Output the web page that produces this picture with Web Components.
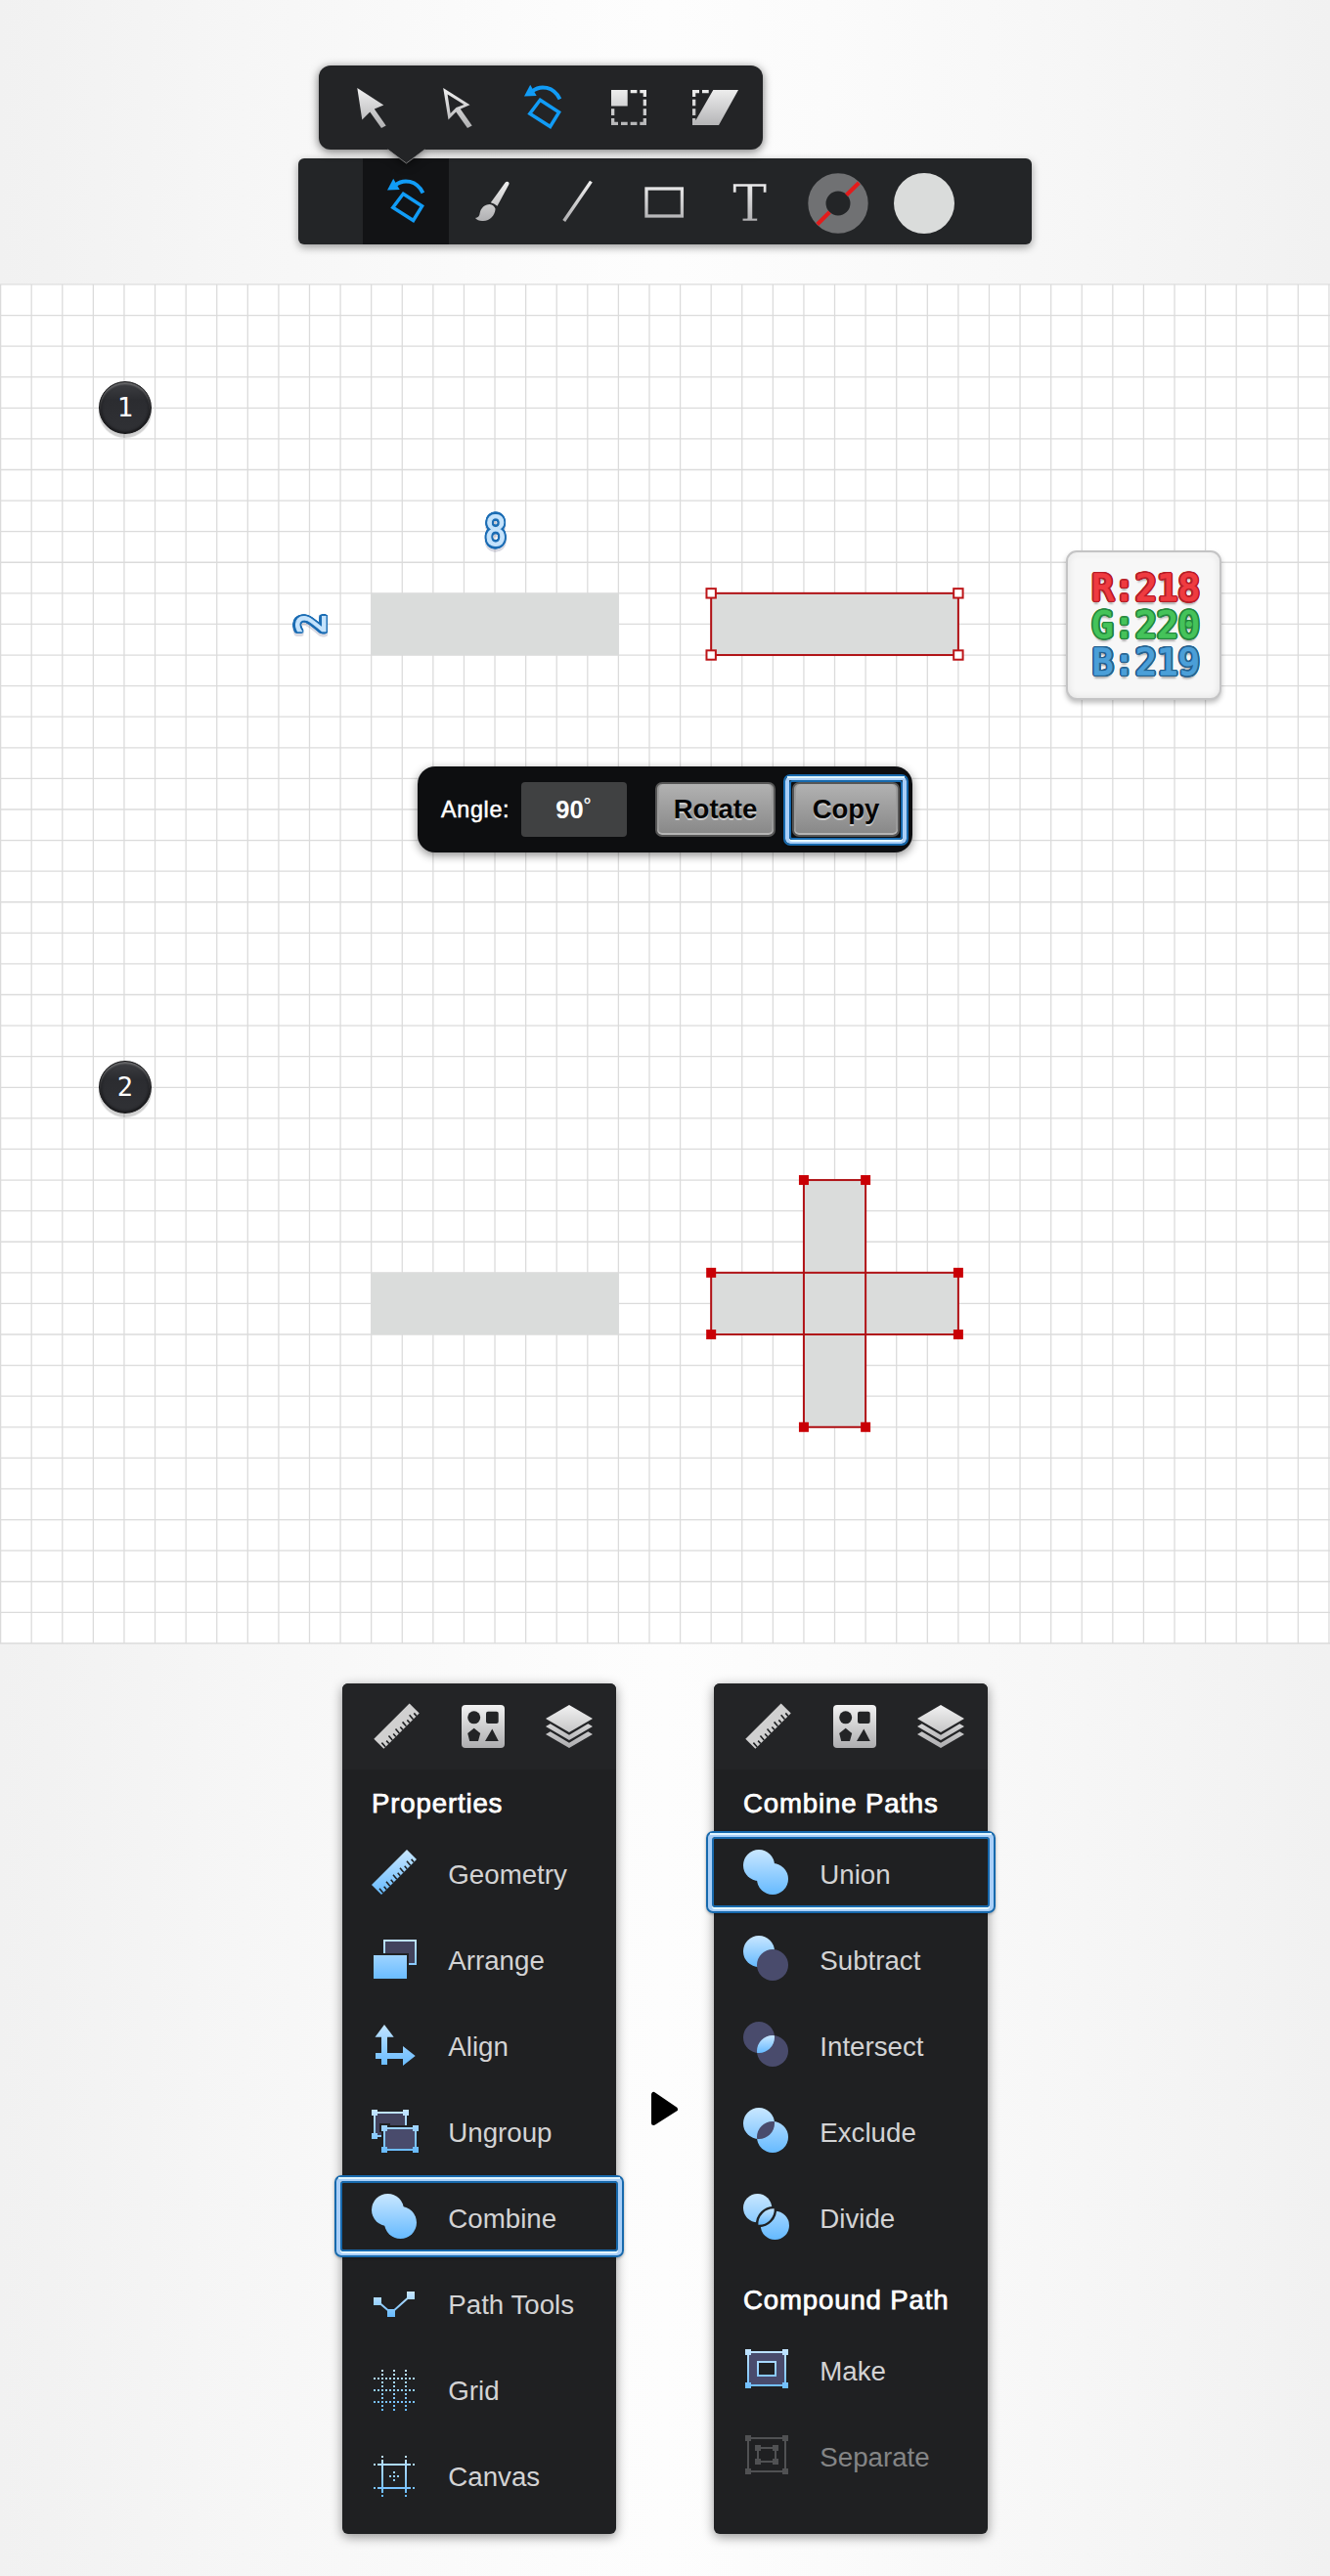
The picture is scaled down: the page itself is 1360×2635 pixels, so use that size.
<!DOCTYPE html>
<html lang="en"><head><meta charset="utf-8"><title>Vector tutorial</title>
<style>
html,body{margin:0}
body{width:1360px;height:2635px;overflow:hidden;font-family:"Liberation Sans",Arial,sans-serif;background:linear-gradient(90deg,#f1f1f1 0,#f7f7f7 22%,#fcfcfc 42%,#fdfdfd 50%,#fbfbfb 62%,#f7f7f7 78%,#f1f1f1 100%)}
</style></head><body>
<tutorial-page></tutorial-page>
<script>
const define=(name,html,setup)=>customElements.define(name,class extends HTMLElement{
  constructor(){super();this.attachShadow({mode:'open'});}
  connectedCallback(){this.shadowRoot.innerHTML=typeof html==='function'?html(this):html;if(setup)setup(this);}
});
const grads=`<defs>
<linearGradient id="g" gradientUnits="userSpaceOnUse" x1="0" y1="22" x2="0" y2="66"><stop offset="0" stop-color="#f2f2f2"/><stop offset="1" stop-color="#adadaf"/></linearGradient>
<linearGradient id="b" gradientUnits="userSpaceOnUse" x1="0" y1="1" x2="0" y2="47"><stop offset="0" stop-color="#c9e7ff"/><stop offset="1" stop-color="#66baff"/></linearGradient>
<clipPath id="lens"><circle cx="30" cy="31" r="16"/></clipPath></defs>`;

/* Ring of shadows that outlines a glyph at the given radius */
const outline=(r,c)=>Array.from({length:20},(_,i)=>`${(r*Math.cos(i*Math.PI/10)).toFixed(2)}px ${(r*Math.sin(i*Math.PI/10)).toFixed(2)}px 0 ${c}`).join(',');

const ruler=`<path d="M36 1 46 11 10 47 0 37Z"/><path stroke="#1f2123" stroke-width="1.6" fill="none" d="M11.8 45.2 8 40.8M15.3 41.7l-2.6-2.9M18.8 38.2 15 33.8M22.3 34.7l-2.6-2.9M25.8 31.2 22 26.8M29.3 27.7l-2.6-2.9M32.8 24.2 29 19.8M36.3 20.7l-2.6-2.9M39.8 17.2 36 12.8M43.2 13.8l-2.6-2.9"/>`;
const rotate=`<path fill="#119cf6" d="M27 31.5 33.2 19.7 39.7 31Z"/><path fill="none" stroke="#119cf6" stroke-width="3.9" d="M35 26.5C44 19.5 57 21.5 63.5 34.3"/><path fill="none" stroke="#119cf6" stroke-width="3.5" d="M43.3 35.3 62.6 47.8 53.6 62.5 32.8 49.2Z"/>`;

/* Tool glyphs, on an 88-unit cell */
const tools={
 select:`<path fill="url(#g)" d="M32.3 23 59.3 40.5 49.8 44.5 61.7 61.5 57 64 45.3 47.5 37.3 55.5Z"/>`,
 direct:`<path fill="url(#g)" fill-rule="evenodd" d="M32.2 23 59.5 40.3 49.8 44.5 61.7 61.5 57 64 45.3 47.5 37.5 55.5ZM36.6 29.6 39.6 49 45.5 43 53.5 39.9Z"/>`,
 rotate,
 rotateActive:`<g transform="translate(-2 1)">${rotate}</g>`,
 scale:`<path fill="url(#g)" d="M28 25h16.7v16.5H28ZM47.7 25h6.7v3.3h-6.7ZM57.3 25H64v7h-3.3v-3.7h-3.4ZM60.7 34.7H64v6.6h-3.3ZM60.7 44.3H64V51h-3.3ZM60.7 54H64v7h-6.7v-3.3h3.4ZM47.7 57.7h6.7V61h-6.7ZM38 57.7h6.7V61H38ZM28 54h3.3v3.7H35V61h-7ZM28 44.3h3.3V51H28Z"/>`,
 skew:`<path fill="url(#g)" d="M44.3 25H70L50 61H23V54h3.3v2.3ZM23 25h7v3.3h-3.7V32H23ZM33 25h6.7v3.3H33ZM23 34.7h3.3v6.6H23ZM23 44.3h3.3V51H23Z"/>`,
 brush:`<path fill="url(#g)" d="M57.6 24.8Q59 23 60.6 24T61.2 27L49.5 48.7Q46.2 46 42.8 45.2ZM41.8 47Q46.3 47.6 47.6 51.8C46.8 58.5 42.5 64 35 64Q29.5 64.3 27 61Q31.3 60.5 31.7 55.7C32.7 51 36.5 47 41.8 47Z"/>`,
 line:`<path stroke="url(#g)" stroke-width="3.4" d="M57.4 23.6 29.7 64"/>`,
 rect:`<rect x="26" y="31" width="36.4" height="28" fill="none" stroke="url(#g)" stroke-width="3.3"/>`,
 text:`<text x="43.8" y="64" text-anchor="middle" font-family="DejaVu Serif,serif" font-size="52.5" fill="url(#g)" stroke="#232527" stroke-width=".4">T</text>`,
 none:`<circle cx="46" cy="46" r="21.6" fill="none" stroke="#707173" stroke-width="18.2"/><path stroke="#e31b1b" stroke-width="4.2" d="M24.7 67.4 37.3 55M54.5 37.5 67.3 24.9"/>`,
 fill:`<circle cx="46" cy="46" r="31" fill="#dadcdb"/>`
};
define('tool-cell',el=>`<style>:host{display:block;width:88px;height:var(--cell-h,88px)}:host([active]){background:#121315}svg{display:block;overflow:visible}</style>
<svg width="88" height="86" viewBox="0 0 88 86">${grads}${tools[el.getAttribute('icon')]}</svg>`);

define('tool-popup',`<style>:host{display:flex;box-sizing:border-box;width:454px;height:86px;padding:0 7px;position:relative;z-index:2;filter:drop-shadow(0 2px 5px rgba(0,0,0,.55));--cell-h:86px;background:#232426;border-radius:12px}
.tip{position:absolute;left:70px;top:85px}</style>
<slot></slot><svg class="tip" width="40" height="16"><path fill="#232426" d="M0 0h39L19.5 15Z"/><path d="M0 .8 19.5 15 39 .8" fill="none" stroke="#8f8f90" stroke-width=".8"/></svg>`);
define('tool-bar',`<style>:host{display:flex;box-sizing:border-box;width:750px;height:88px;padding-left:66px;background:#232527;border-radius:6px;box-shadow:0 3px 9px rgba(0,0,0,.38)}</style><slot></slot>`);

/* Highlight frame drawn over a button or menu row */
define('focus-ring',`<style>:host{display:block;box-sizing:border-box;border:2px solid #1769ad;border-radius:7px;padding:4px;background:none;box-shadow:inset 0 0 0 4px #a9cff8,0 1px 3px rgba(0,0,0,.3);position:relative;pointer-events:none}
div{box-sizing:border-box;height:100%;border:2px solid #1769ad;border-radius:3px;box-shadow:0 2px 0 #e6faff}
i{position:absolute;left:2px;right:2px;top:0;height:2px;background:#dff5ff}</style><div></div><i></i>`);

define('angle-button',`<style>:host{display:flex;box-sizing:border-box;height:56px;align-items:center;justify-content:center;background:linear-gradient(#b2b2b2,#878787);border:2px solid #565656;border-radius:7px;box-shadow:inset 0 -2px 0 #b5b5b5,inset 2px 0 0 #9b9b9b,inset -2px 0 0 #9b9b9b;color:#050505;font:bold 27.5px "Liberation Sans",sans-serif;text-shadow:0 1.5px 0 #ccc;position:relative}
::slotted(focus-ring){position:absolute!important;left:-11px;top:-10px;width:128px;height:73px}</style><slot></slot>`);
define('angle-panel',`<style>:host{display:flex;align-items:center;box-sizing:border-box;width:506px;height:88px;padding-left:24px;background:#0d0e10;border-radius:18px;box-shadow:0 3px 10px rgba(0,0,0,.45);color:#fff}
.l{width:82px;font-size:23.4px;letter-spacing:.65px;-webkit-text-stroke:.5px #fff;white-space:nowrap}
.v{width:108px;height:56px;background:#404142;border-radius:4px;display:flex;align-items:center;justify-content:center;font-weight:bold;font-size:25.5px;position:relative}
.v span{padding-right:9px}.v sup{position:absolute;left:63.5px;top:14px;font-size:20px;line-height:20px;font-weight:normal;-webkit-text-stroke:.3px #fff}
.r{width:123px;margin-left:29px}.c{width:110px;margin-left:17px}</style>
<span class="l">Angle:</span><div class="v"><span>90</span><sup>°</sup></div><angle-button class="r">Rotate</angle-button><angle-button class="c">Copy<focus-ring></focus-ring></angle-button>`);

define('step-badge',`<style>:host{display:flex;width:54px;height:54px;align-items:center;justify-content:center;border-radius:50%;box-sizing:border-box;border:1px solid #151517;background:linear-gradient(#3e3f43,#2b2c30 35%,#303135);box-shadow:inset 0 2px 2px rgba(255,255,255,.35),inset 0 0 3px 1px #101012,0 4px 1px rgba(0,0,0,.18);color:#fff;font:27px "DejaVu Sans Mono",monospace}
span{position:relative;top:-1px}</style><span><slot></slot></span>`);

define('color-card',`<style>:host{display:flex;flex-direction:column;box-sizing:border-box;width:159px;height:153px;padding:18px 0 0 24.6px;border:2px solid #c4c4c5;border-radius:11px;background:#f7f7f7;box-shadow:inset 0 0 7px #dedede,inset 0 3px 2px #fff,0 3px 5px rgba(0,0,0,.25);font:36.6px/38.1px "DejaVu Sans Mono",monospace}
span{height:38.1px}
.r{color:#ef3b40;-webkit-text-stroke:1.4px #ef3b40;text-shadow:${outline(2.3,'#b61e28')},0 4px 2px rgba(0,0,0,.3)}
.g{color:#45c35a;-webkit-text-stroke:1.4px #45c35a;text-shadow:${outline(2.3,'#24873e')},0 4px 2px rgba(0,0,0,.3)}
.b{color:#4b9fd8;-webkit-text-stroke:1.4px #4b9fd8;text-shadow:${outline(2.3,'#25618e')},0 4px 2px rgba(0,0,0,.3)}</style>
<span class="r">R:218</span><span class="g">G:220</span><span class="b">B:219</span>`);

/* Outlined measure number */
define('size-mark',`<style>:host{display:flex;width:40px;height:48px;align-items:center;justify-content:center;font:39px/48px "DejaVu Sans Mono",monospace;color:#c5e3fc;-webkit-text-stroke:1px #c5e3fc;text-shadow:${outline(2.5,'#1c6db4')};filter:drop-shadow(0 3px .6px rgba(70,70,110,.2))}
span{display:block;transform:scale(.94,1.08)}:host([turned]) span{transform:rotate(-90deg) scale(.9,1.06)}</style><span><slot></slot></span>`);

const P=31.59, OX=.6, OY=.95;
define('drawing-canvas',()=>{
 const X=k=>OX+P*k, Y=k=>OY+P*k, f=n=>n.toFixed(2); let d='';
 for(let i=0;i<=43;i++)d+=`M${f(X(i))} .4V${f(Y(44)+.6)}`;
 for(let j=0;j<=44;j++)d+=`M0 ${f(Y(j))}H1360`;
 const bar=(a,b,c,e,line)=>`<rect x="${X(a)}" y="${Y(b)}" width="${P*c}" height="${P*e}" ${line?'fill="none" stroke="#b01216" stroke-width="2"':'fill="#dadcdb"'}/>`;
 const hs=(a,b,c,e,open)=>[[a,b],[a+c,b],[a,b+e],[a+c,b+e]].map(([x,y])=>open?`<rect x="${X(x)-4.7}" y="${Y(y)-4.7}" width="9.4" height="9.4" fill="#fff" stroke="#bd1518" stroke-width="2"/>`:`<rect x="${X(x)-5}" y="${Y(y)-5}" width="10" height="10" fill="#c90005"/>`).join('');
 return `<style>:host{display:block;position:relative;height:1392px;background:linear-gradient(#fff,#fff) 0 0/100% 1391px no-repeat}svg.art{display:block}
 step-badge,color-card,angle-panel,size-mark{position:absolute}</style>
 <svg class="art" width="1360" height="1392">
 <path d="${d}" fill="none" stroke="#000" stroke-opacity=".14" stroke-width="1.3"/>
 ${bar(12,10,8,2)}${bar(23,10,8,2)}${bar(23,10,8,2,1)}${hs(23,10,8,2,1)}
 ${bar(12,32,8,2)}${bar(23,32,8,2)}${bar(26,29,2,8)}${bar(23,32,8,2,1)}${bar(26,29,2,8,1)}${hs(23,32,8,2)}${hs(26,29,2,8)}</svg>
 <size-mark style="left:487px;top:230px">8</size-mark><size-mark turned style="left:299px;top:324px">2</size-mark>
 <step-badge style="left:101px;top:100px">1</step-badge><step-badge style="left:101px;top:795px">2</step-badge>
 <color-card style="left:1090px;top:272.5px"></color-card>
 <angle-panel style="left:427px;top:494px"></angle-panel>`;
});

const two=`<circle cx="16" cy="17" r="16"/><circle cx="30" cy="31" r="16"/>`;
const sq=(s,pts)=>pts.map(([x,y])=>`<rect x="${x}" y="${y}" width="${s}" height="${s}" stroke="none"/>`).join('');
const B='fill="url(#b)"',D='#494b6c',N='#1f2123';
const lens=`<circle cx="16" cy="17" r="16" clip-path="url(#lens)"/>`;
const lensGrad=`<defs><linearGradient id="l" gradientUnits="userSpaceOnUse" x1="0" y1="15" x2="0" y2="33"><stop offset="0" stop-color="#c9e7ff"/><stop offset="1" stop-color="#66baff"/></linearGradient></defs>`;
const icons={
 geometry:`<g ${B}>${ruler}</g>`,
 arrange:`<rect x="13" y="6" width="32" height="24" fill="#42435d" stroke="url(#b)" stroke-width="2"/><path fill="${N}" d="M0 19h38v28H0Z"/><path ${B} d="M2 21h34v24H2Z"/>`,
 align:`<path ${B} d="M13 4 22.7 16.7H16V33H32V26L44.7 36 32 46V39H16V45H10V39H4V33H10V16.7H3.5Z"/>`,
 ungroup:`<g fill="url(#b)" stroke="url(#b)" stroke-width="2"><rect x="3" y="6" width="32" height="24" fill="#42435d"/>${sq(6,[[0,3],[32,3],[0,27]])}<path fill="${N}" stroke="none" d="M8 17h11v2h29v16H13v-2H10v-7H8Z"/><rect x="13" y="22" width="32" height="22" fill="${D}"/>${sq(6,[[10,19],[42,19],[10,41],[42,41]])}</g>`,
 combine:`<g ${B}><circle cx="16.5" cy="17.5" r="16.5"/><circle cx="29.5" cy="30.5" r="16.5"/></g>`,
 path:`<defs><linearGradient id="p" gradientUnits="userSpaceOnUse" x1="0" y1="13" x2="0" y2="39"><stop offset="0" stop-color="#c9e7ff"/><stop offset="1" stop-color="#66baff"/></linearGradient></defs><path d="M6 23 20 35 40 17" fill="none" stroke="url(#p)" stroke-width="2"/><g fill="url(#p)">${sq(8,[[2,19],[36,13],[16,31]])}</g>`,
 grid:`<path fill="none" stroke="url(#b)" stroke-width="2" stroke-dasharray="2 2" d="M2 14H44M2 26H44M2 38H44M11 5V47M23 5V47M35 5V47"/>`,
 canvas:`<path fill="none" stroke="url(#b)" stroke-width="2" d="M6 14H40M6 38H40M11 9V43M35 9V43M2 14h2M42 14h2M2 38h2M42 38h2M11 5v2M11 45v2M35 5v2M35 45v2M18 26h2M22 26h2M26 26h2M23 21v2M23 29v2"/>`,
 union:`<g ${B}>${two}</g>`,
 subtract:`<defs><linearGradient id="u" x1="0" y1="0" x2="0" y2="1"><stop offset="0" stop-color="#c9e7ff"/><stop offset="1" stop-color="#66baff"/></linearGradient></defs><circle cx="16" cy="17" r="16" fill="url(#u)"/><circle cx="30" cy="31" r="16" fill="${D}"/>`,
 intersect:`${lensGrad}<g fill="${D}">${two}</g><g fill="url(#l)">${lens}</g>`,
 exclude:`<g ${B}>${two}</g><g fill="${D}">${lens}</g>`,
 divide:`${lensGrad}<g ${B}><circle cx="14.6" cy="15.6" r="14.6"/><circle cx="32.4" cy="33.4" r="14.6"/></g><path fill="url(#l)" stroke="${N}" stroke-width="2.4" d="M32.8 15.2A16.8 16.8 0 0 1 14.2 33.8A17 17 0 0 1 32.8 15.2Z"/>`,
 make:`<g fill="url(#b)" stroke="url(#b)" stroke-width="2"><rect x="5" y="7" width="38" height="34" fill="${D}"/>${sq(6,[[2,4],[40,4],[2,38],[40,38]])}<rect x="15" y="17" width="18" height="14" fill="${N}"/></g>`,
 separate:`<g fill="#505153" stroke="#505153" stroke-width="2"><rect x="5" y="7" width="38" height="34" fill="none"/><rect x="15" y="17" width="18" height="14" fill="none"/>${sq(6,[[2,4],[40,4],[2,38],[40,38],[12,14],[30,14],[12,28],[30,28]])}</g>`
};
define('menu-item',el=>`<style>:host{display:flex;box-sizing:border-box;height:88px;padding-left:30px;align-items:center;position:relative;color:#d3d3d4;font-size:27.7px;white-space:nowrap}
:host([disabled]){color:#848586}svg{display:block;flex:none;width:48px;height:48px;overflow:visible}span{margin-left:30.3px;padding-top:5px}
focus-ring{position:absolute;left:-8px;top:2px;width:296px;height:84px}</style>
<svg viewBox="0 0 48 48">${grads}${icons[el.getAttribute('icon')]}</svg><span><slot></slot></span>${el.hasAttribute('selected')?'<focus-ring></focus-ring>':''}`);
define('menu-heading',`<style>:host{display:flex;box-sizing:border-box;height:var(--h,61px);align-items:flex-end;padding:0 0 10px 30px;color:#fff;font-size:27.6px;line-height:32px;letter-spacing:.85px;-webkit-text-stroke:.75px #fff;white-space:nowrap}</style><slot></slot>`);
define('menu-panel',`<style>:host{display:block;width:280px;height:870px;background:#1f2022;border-radius:6px;box-shadow:0 3px 12px rgba(0,0,0,.42)}
header{height:88px;background:#232426;border-radius:6px 6px 0 0}svg{display:block}</style>
<header><svg width="280" height="88">${grads}<g fill="url(#g)"><g fill="#d0d0d0" transform="translate(32.3 19.4) scale(1.01)">${ruler}</g>
<rect x="122" y="22" width="44" height="44" rx="4"/><path d="M232 22 256 36 232 50 208 36Z"/><path d="M208 44 212.7 41.3 232 52.7 251.3 41.3 256 44 232 58ZM208 52 212.7 49.3 232 60.7 251.3 49.3 256 52 232 66Z"/></g>
<g fill="#232426"><circle cx="134.7" cy="34.8" r="6.5"/><rect x="147" y="28.7" width="12.7" height="12.2" rx="2"/><path d="M134.7 45.8 141.2 51 139 59H130.2L128.2 51ZM153.3 46.5 159.8 59H146Z"/></g></svg></header><slot></slot>`);
define('play-arrow',`<style>:host{display:block;width:28px;height:38px}svg{display:block}</style><svg width="28" height="38"><path d="M2.5 3.5V32.5L24.5 18.5Z" stroke="#000" stroke-width="5" stroke-linejoin="round"/></svg>`);

define('tutorial-page',`<style>:host{display:flex;flex-direction:column}
header{height:290px;box-sizing:border-box;padding:67px 0 0 305px;display:flex;flex-direction:column;gap:9px}
tool-popup{margin-left:21px}
main{display:flex;padding:40px 0 0 350px}play-arrow{margin:417px 36px 0}</style>
<header><tool-popup><tool-cell icon="select"></tool-cell><tool-cell icon="direct"></tool-cell><tool-cell icon="rotate"></tool-cell><tool-cell icon="scale"></tool-cell><tool-cell icon="skew"></tool-cell></tool-popup>
<tool-bar><tool-cell icon="rotateActive" active></tool-cell><tool-cell icon="brush"></tool-cell><tool-cell icon="line"></tool-cell><tool-cell icon="rect"></tool-cell><tool-cell icon="text"></tool-cell><tool-cell icon="none"></tool-cell><tool-cell icon="fill"></tool-cell></tool-bar></header>
<drawing-canvas></drawing-canvas>
<main><menu-panel><menu-heading>Properties</menu-heading><menu-item icon="geometry">Geometry</menu-item><menu-item icon="arrange">Arrange</menu-item><menu-item icon="align">Align</menu-item><menu-item icon="ungroup">Ungroup</menu-item><menu-item icon="combine" selected>Combine</menu-item><menu-item icon="path">Path Tools</menu-item><menu-item icon="grid">Grid</menu-item><menu-item icon="canvas">Canvas</menu-item></menu-panel>
<play-arrow></play-arrow>
<menu-panel><menu-heading>Combine Paths</menu-heading><menu-item icon="union" selected>Union</menu-item><menu-item icon="subtract">Subtract</menu-item><menu-item icon="intersect">Intersect</menu-item><menu-item icon="exclude">Exclude</menu-item><menu-item icon="divide">Divide</menu-item><menu-heading style="--h:68px">Compound Path</menu-heading><menu-item icon="make">Make</menu-item><menu-item icon="separate" disabled>Separate</menu-item></menu-panel></main>`);
</script></body></html>
